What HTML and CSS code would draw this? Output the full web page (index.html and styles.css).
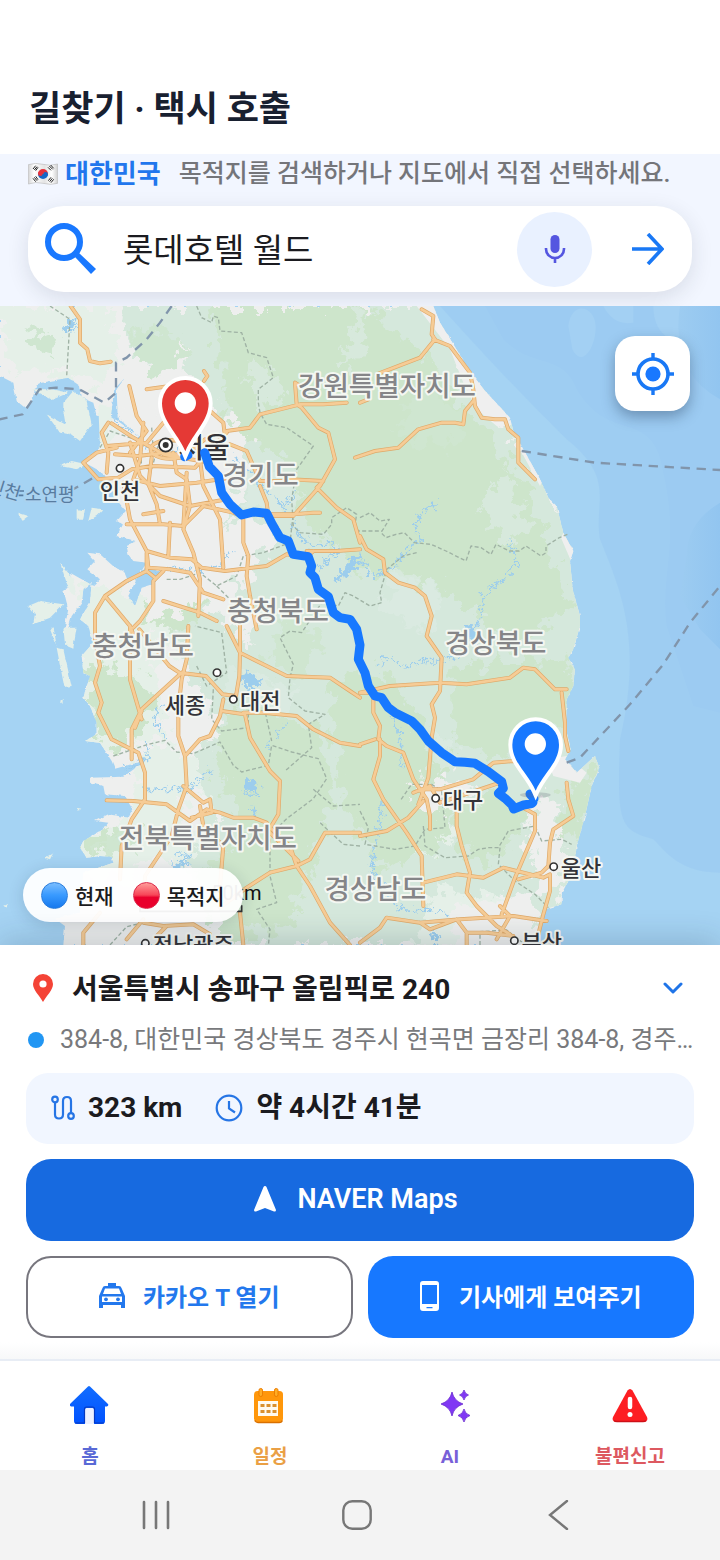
FILE: index.html
```html
<!DOCTYPE html>
<html lang="ko">
<head>
<meta charset="utf-8">
<meta name="viewport" content="width=device-width, initial-scale=1">
<title>길찾기 · 택시 호출</title>
<link rel="stylesheet" href="styles.css">
</head>
<body>
<header class="app-header"><h1 class="app-title">길찾기 · 택시 호출</h1></header>

<section class="search-area">
  <div class="region-row">
    <svg class="flag" viewBox="0 0 90 64" aria-hidden="true">
      <defs><linearGradient id="cloth"><stop offset="0" stop-color="#d5d5d5"/><stop offset=".2" stop-color="#fff"/><stop offset=".55" stop-color="#e4e4e4"/><stop offset=".8" stop-color="#fff"/><stop offset="1" stop-color="#cfcfcf"/></linearGradient></defs>
      <path d="M1 4Q23-3 45 3T89 2V60Q67 66 45 60T1 62Z" fill="url(#cloth)" stroke="#bbb" stroke-width="2"/>
      <path d="M30 32a15 15 0 0 1 30 0Z" fill="#e6323c"/><path d="M30 32a15 15 0 0 0 30 0Z" fill="#1668c7"/>
      <circle cx="37" cy="31" r="7" fill="#e6323c"/><circle cx="53" cy="33" r="7" fill="#1668c7"/>
      <g stroke="#222" stroke-width="3"><path d="M15 17l8-10M19 20l8-10M23 22l7-10M60 12l9 9M64 8l10 10M68 5l9 10M15 45l8 10M19 42l8 10M23 39l7 10M61 52l8-10M65 55l8-10M69 58l8-10"/></g>
    </svg>
    <strong class="country">대한민국</strong>
    <span class="hint">목적지를 검색하거나 지도에서 직접 선택하세요.</span>
  </div>
  <form class="search-box">
    <svg class="search-icon" viewBox="0 0 54 54" aria-hidden="true"><circle cx="20" cy="20" r="16" fill="none" stroke="#1978ff" stroke-width="6"/><path d="M31 30l4 1 17 16-5 5-16-17v-4z" fill="#1978ff"/></svg>
    <input class="search-input" type="text" value="롯데호텔 월드" aria-label="목적지 검색">
    <button class="voice-button" type="button" aria-label="음성 검색"><svg width="22" height="30" viewBox="0 0 22 30"><rect x="6.500" y="1" width="9" height="18" rx="4.500" fill="#5456e0"/><path d="M2 14v1a9 9 0 0 0 18 0v-1M11 24v5" fill="none" stroke="#5456e0" stroke-width="2.600"/></svg></button>
    <button class="go-button" type="submit" aria-label="검색"><svg width="32" height="32" viewBox="0 0 32 32"><path d="M0 16h29M16 1l14 15-14 15" fill="none" stroke="#1978f5" stroke-width="3.6"/></svg></button>
  </form>
</section>

<main class="map">
<svg class="map-canvas" viewBox="0 0 2160 1917" preserveAspectRatio="xMidYMid slice" role="img" aria-label="경로 지도">
<defs>
  <filter id="rough" x="-5%" y="-5%" width="110%" height="110%"><feTurbulence type="fractalNoise" baseFrequency=".025" numOctaves="4" seed="4"/><feDisplacementMap in="SourceGraphic" scale="110" xChannelSelector="R" yChannelSelector="G"/></filter>
  <filter id="coast" x="-5%" y="-5%" width="110%" height="110%"><feTurbulence type="fractalNoise" baseFrequency=".06" numOctaves="3" seed="8"/><feDisplacementMap in="SourceGraphic" scale="10" xChannelSelector="R" yChannelSelector="G"/></filter>
  <filter id="lake" x="-10%" y="-10%" width="120%" height="120%"><feTurbulence type="fractalNoise" baseFrequency=".06" numOctaves="3" seed="3"/><feDisplacementMap in="SourceGraphic" scale="48" xChannelSelector="R" yChannelSelector="G"/></filter>
  <path id="mainland" d="M0 0H1300L1320 50 1345 90 1405 190 1455 255 1530 335 1540 375 1570 430 1620 520 1645 575 1670 600 1690 680 1720 735 1710 765 1718 850 1740 930 1740 960 1720 1030 1705 1055 1725 1090 1720 1140 1700 1180 1698 1270 1712 1330 1695 1360 1730 1400 1785 1350 1798 1385 1775 1440 1755 1530 1730 1620 1720 1700 1685 1760V1795L1635 1810 1620 1860 1600 1917H190L195 1860 165 1838 240 1820 250 1700 340 1670 335 1652 300 1650 260 1655 240 1625 250 1605 310 1570 325 1550 285 1545 325 1525 385 1535 400 1510 375 1470 315 1465 310 1440 270 1430V1415L370 1412 440 1362 345 1388 335 1365 300 1310 255 1305 290 1285V1250L270 1200 250 1175 270 1110 250 1100 245 1050 280 1010 265 960 240 940 270 890 275 830 250 850 245 890 215 930 200 985 195 960 205 910 190 850 215 845 210 800 245 820 280 840 300 820 262 790 285 765 262 740 300 745 345 785 370 795 385 830 415 810 440 770 400 765 385 745 380 720 410 705 350 690 370 655 350 645 378 615 345 575 330 520 290 490 255 470 265 450 305 425 300 370 330 325 290 330 280 290 245 275 240 240 205 215 150 225 110 235 95 285 75 305 50 285 40 230 0 210Z"/>
  <clipPath id="land"><use href="#mainland"/></clipPath>
  <linearGradient id="sea-deep" x1="0" y1="0" x2="1" y2="0"><stop offset="0" stop-color="#9dccf1"/><stop offset="1" stop-color="#92c5f0"/></linearGradient>
</defs>
<rect width="2160" height="1917" fill="#a5d3f3"/>
<path d="M1455 0L1510 100C1600 190 1690 140 1730 250 1830 420 1960 300 1990 500 2040 720 1980 800 2000 960L2080 1200 2160 1220V0Z" fill="#9bcaf1"/>
<path d="M1320 0C1500 200 1600 300 1700 400 1850 520 1780 590 1800 700 1860 850 1930 1000 1860 1300 1850 1560 1860 1570 1960 1600 2000 1640 2040 1700 2160 1700V0Z" fill="#9ccbf1" opacity=".75"/>
<path d="M1705 60c10-80 80-60 82 0s-40 130-70 70zM1810 0q30 60 90 50v-50zM1960 0h110q0 140-60 100-50-30-50-100z" fill="#a3d0f3"/>
<path d="M2160 590q-100 60-100 160l-20 120 60 100 60 60V590ZM2040 0h120v280q-150-80-120-280Z" fill="url(#sea-deep)"/>

<g filter="url(#coast)">
  <use href="#mainland" fill="#eeefee"/>
  <g fill="#e5f0e9"><path d="M190 290l30-35 40 30 15 70-35 50-40-30-10-60zM140 325l55 30 15 30-30-5zM95 250h60l50 10-50 22zM180 480l35-15 45 10-30 15zM230 610l25 3-5 25h-20zM275 605l35 5-20 20-25 15zM55 620l30 10-20 15zM85 900l35-15 70 10-40 40-50 20 5-30zM180 770l30 90 20 10-10-50zM150 970l20 50-10-60zM170 1025l20 5 25 110-22 3zM190 965h40l-10 60-25-10zM180 1185l8-6v15zM135 1655l25-15-10 20zM230 1505l14 3-8 6zM12 1800l12-6-5 14zM295 295l60 10 5 110-60 15z"/></g>
</g>
<g clip-path="url(#land)">
  <g filter="url(#rough)">
    <path d="M380 0H1290L1400 200 1480 310 1570 440 1680 600 1790 950 1750 1300 1850 1350 1780 1600 1700 1800 1500 1917H700L560 1700 600 1500 580 1300 540 1000 300 1350 280 1000 400 870 540 980 600 800 700 620 650 380 540 180 400 160Z" fill="#d5e8dc"/>
    <path d="M0 0h330l20 160-60 80-100-40-180-10zM240 830l290 50 20 400-300 70-40-200zM400 1350l150-50 90 200-60 160-180 20zM1200 1400l130 0 30 200-110 60zM1300 1750l200 20 20 147h-280zM220 1580l200-40-20 180-180 0zM380 900l90-90 40 100z" fill="#e5f0e8"/>
    <path d="M640 0h450l160 120 180 220 120 160 120 260 40 150-170 120-200-180-270-60-150-140-60-200-170-70zM980 1120l160-30 130 150 100 250-60 140-180 60-100-190zM700 1190l260 80 40 200-130 380-200 60-80-200 150-120-100-230zM1360 1080l340-20 40 170-200 130-180-50zM260 1060l150 50 60 60-100 170-90-70zM470 820l150 80-80 80-120-50zM1360 1530l120-80 120 80-120 140-100-40zM1700 1440l100-60-50 180-70 40zM250 1600l90-50 20 80-80 30z" fill="#cde5cb"/>
    <path d="M80 60l80 30 10 70-70-30zM400 60l120 30 50 60-100 60-70-80zM860 930l120 60-90 140-90-70zM1250 250l150 60-40 120-170-50zM340 1590l120-15-60 60-140 10z" fill="#cfe6d0"/>
    <path d="M760 480l160 80-80 70-120-40zM1180 780l150 80-60 120-120-60zM1520 480l60 190-60 50-80-110zM700 1080l200 70-60 70-160-50zM1250 1260l160 90-100 50zM760 150l100 100-50 60-70-80zM1080 0l20 130-70 70 10-100z" fill="#dcebe3" opacity=".7"/>
    <path d="M380 205l60 0 40 140 30-140 45-80 5 130 100 60 90 80-20 140-60 110 30 200 80 100-60 60-130-120-130 60-50-180-50-100-40-180zM570 740l160-110 100 50-90 160zM460 990l100 80 110 210-110 80-80-120zM530 1480l70-20 50 60-80 60zM1240 1430l110-20 80 20-50 70-130 20zM1620 1440l60 80 20 240-80 0-40-180zM1370 1800l230-40v157h-250z" fill="#eeefee"/>
  </g>
  <path d="M1300 0l160 240 70 100-40 20-60-50-40-80-40-100-100-130zM1570 430l60 90-10 20-60-110zM1640 1360l60-10 60 50-20 30-80-20zM1690 680l35 60-12 25-30-70z" fill="#efefef"/>
</g>
<path d="M460 790l25 10-25 35-35 10-20 55-20-30 25-50 25-35zM375 215l-25 35 3 85 70 60-90-65 10-80z" fill="#a5d3f3" filter="url(#coast)"/>

<g fill="none" stroke="#9ccded" stroke-width="5" stroke-linejoin="round" filter="url(#lake)">
  <path d="M190 70l25-30 10 15 5 20M350 340l0 10 80 70 60 25 60-20 60 20 40-60M690 455l70 40 20 50 60 40 10 25 40-60M880 650l20 40 40 35 50-15 20 30-60 50M460 800l40-15 80 10 80-20 30-40M1020 820l40-60 30 5 25 45 60-20 60-70 30-20-20-40 20-40 50-30"/>
  <path d="M1530 700l20 70-40 50-60 50-10 70-40 60-50 40M1140 1090l10-40 60 30 180-30M1170 1210l30 70 5 110M1340 1820l-140-10-90-120 20-90 20-120M380 1390l60-30 5-50M430 1450h130l80-60M500 1300l-40-60 30-50M760 1500l20 60M750 1440l-20 20 40 10M800 1320l60-70M520 1640l50 10-30 30"/>
</g>
<g fill="#9ccded" filter="url(#lake)"><path d="M1050 770l-50 50 15 5 30-20 40-50 5-20zM720 1110l30-10 40 30-30 10 20 25-30-10zM740 1420l35 10 0 35-40-15zM510 1665l60 10-45 15zM1290 1880l10 37h15l-5-40zM1395 960l30 5 10 60-20-20zM190 70l25-30 5 20-15 25z"/></g>

<g fill="none" stroke="#9fb2a4" stroke-width="4" stroke-dasharray="12 7" stroke-linejoin="round">
  <path d="M150 0l60 40-10 170M590 0l15 35 30 15 5-20 15 5 5 40 65 5 20 60 55 15 20 60-45 35v40l5 30 20 35 60 10 80 55-50 70-15 90 5 80 20 20 70 5 25-30v-20l45-30 30 20-5 30 10 20 70 0"/>
  <path d="M300 425l30-50 90 30 5 80 30 5 20-75 60-10M455 365l5 70 90 10M500 820l40 0 60-20 50 40 60-30 20-60 60-10 80-30 10-90M650 840l50 50"/>
  <path d="M1080 635l30-15 30 25 28-5-25 40 15 15 30-10 25-5 30 30 50 5 45 20 60 30 15-45 30 5 30 20 15-30 40 20 30 0 20-15 45 30 15-10v-20l40-25 25-10M1250 740l-40 10-50 40-20 70 5 30-35 10-50-30-25-10-20 40-50-10-60 90-35-5-30 20 40 80-10 40-5 60 50 40 60 10-50 30 10 70-80 70M340 1350l105-35 50-12 35 35 50 5 80-35 40 70 25 20 80-20 10-60 60 20 80 20 25 60-40 60-80 60-20 20M940 1450l60 50 80-5M590 1080l30 60 60-40-15-120-80-20M640 1150l-5 90 30 35 80-10 0-50 50 0 20 90M810 1560v150l20 80-60 20 40 60-5 50M1080 1620l-50-5-70-65M1080 1515l25 50-10 50 90 15 60-10 30-50 60-5-10-110-30-20-60 0-35 50M1270 1560l5 60 60 35 70-5 30-20 30-5 30 0 30-50 80-15 20 45 60-5 30 15M1500 1625l-5 50 50 50 60 40 40 40M330 1917l50-55 40-10M1440 1917v-40l80-5 50 40"/>
</g>
<g fill="none" stroke="#8195ab" stroke-width="7" stroke-dasharray="28 20">
  <path d="M515 0l-35 50-40 50-60 55-32 15v90l-35 30-75-40-70-5-50 5-50 75-70 15M1565 435l220 35 375 22M1700 1370l40-15 150-160 100-120 80-125 90-110M210 555l80-45"/>
</g>

<defs><g id="roads">
  <path d="M212 0l28 40 0 70 22 20 8 35 30 7 32-5M388 240l22 90 30 45-50 65M440 250l70-10 70 30 90 80 5 40M612 195l10 15-10 15M325 350l-20 30 20 60-5 60M335 352l60 40 100 55 120 20M320 420l120-10 50-60 60-15M345 445l70 5 80-10 60 10 60-50M250 470l40-30 60-15M250 470l45 50 60-5 40-25 60-10 130 5 60-70 35-35M390 410l30 100 60 60 90 30 110-20M430 350l-10 110-20 60 80 20 110-10 100-15M455 455l-10 80 25 60 10 60M520 440l10 60 30 20 10 80-20 70 30 70 20 80-5 110M560 500l-10 160M370 530l20 110 50 95 5 50 65 5 60 10 40 60 60 20M380 655h110l60 5 20-20 40-40 90 20 10 5h90l80 0 60-5 20 0M430 625l60-10M510 650l-5 100M600 460l10 80 50 100 10 145M440 735l70 20 65 5 30 25 70 10M440 740l0 55 25 20M490 795l-30 30 0 60-40 60-20 20M440 795l-60 30-65 45-30 50 0 80 15 80-15 50 20 60-10 30 40 80 80 40 20 60 0 80-40 60-30 80-5 100M315 870l75 90 20 50M490 885l110 35 50 25M730 640l0 70 15 40-5 60 10 60 20 100M675 795l125-15 60-35 60 10 20-20M900 240l-15-10 5 65 15 10 50 60 30 15 20 80-45 80-80 90-90 0M680 375l70-10 30-40 120-30 70 0 70-5M690 415l50 20 40 90 85 0M780 540l20 50 5 40M870 520l100 5-20 20 60 60 50 35 20 70M920 735l90 0 70-5"/>
  <path d="M1080 290l25-10M1130 205l130-50 45-55-10-15 5-55-35-20M1300 100l50 20 60 80 10 50 5 50 20 35 40 5 30 0 10 30 30 25 0 75 50 50M1420 285l-25 30-5 40-25-5-40 0-70 20-60 55-70 10-60 20M1080 690l20 40 50 30 5 40 40 30 50 15 30 25 20 60-15 60 45 65-5 100-25 40 10 40-10 60-5 60-5 60-30 80M1080 1160l90-20 150-10 80 5 130-20 40-30 35 5 60 60 35 0M1685 1160l10 90 0 40 10 45M1080 1160l40 0 0 60 20 40-5 40 25 20 50 20 30 80 40 60 10 50 0 40M1125 1300l-45 15M1140 1300l0 50-20 70 30 60 70 100 45 70 5 150M1080 1590l80-15 65-40 45-50M1270 1450l50 0 100-30 60-50 60-5 30 5M1240 1460l50-20 30 50 60-20 120-40M1370 1500l0 60 15 60 25 80-10 60 30 40 60 60 40 25M1270 1730l100-25 80 10 60-30 120 30 20-10 0 50-20 70-20 80M1560 1500l45 25 0 50-60 140-40 110M1700 1430l5 50 15 50-60 40-10 40-5 70-20 20-70 20M1080 1910l60-45 20-30 100 15 120-10 160-10 100 15M1260 1850l30 20 80-30 30 40 0 37M1500 1800l30 30-40 70M1400 1880l60 0 80 10"/>
  <path d="M680 960l40 80-2 70-10 60-40-5-50-55-80-10-30-20-90-110M720 960l0 80 80 40 60 30 130 5 60 40 30 20M545 1100l-120 110-30 60 0 90M390 960l0 160 35 120M425 1215l-20 50M565 960l-5 100-15 60-10 90 0 80 20 60 5 90-25 70-20 80-80 120-5 80M670 1180l-10 50-30 60-30 10-45 50M665 1215l70 10 15 70 60 100 30 30-5 100-30 50 90 90M730 1220l60 0 100 10 50 40 80 40 60 10M800 1550l-40-15-60 0-40-15-40-10-50 35-70-50-100-10-80-2M550 1440l60 50 20-10 5 40-60 15M600 1500l10 60 60 60-10 120M805 1560l65 60 20 60 40 60 60 110 60 67M890 1680l40-20 45-80 105 0M890 1680l-80 20-70 45-80 60M430 1850l60 10 90-5 50 30M720 1820l10 97M300 1820l-50 60 0 37M470 1890l30-30M380 1900l50-60"/>
  <ellipse cx="510" cy="430" rx="58" ry="28"/>
</g></defs>
<g fill="none" stroke-linejoin="round" stroke-linecap="round">
  <use href="#roads" stroke="#dfa969" stroke-width="12"/><use href="#roads" stroke="#f6cc96" stroke-width="8"/>
</g>

<g class="map-labels province" text-anchor="middle">
  <text x="1161" y="270">강원특별자치도</text><text x="782" y="537">경기도</text><text x="834" y="945">충청북도</text><text x="429" y="1050">충청남도</text><text x="1487" y="1041">경상북도</text><text x="624" y="1626">전북특별자치도</text><text x="1126" y="1779">경상남도</text>
</g>
<g class="map-labels city" text-anchor="middle">
  <text class="capital" x="612" y="456">서울</text><text x="360" y="578">인천</text><text x="555" y="1222">세종</text><text x="781" y="1208">대전</text><text x="1389" y="1506">대구</text><text x="1743" y="1710">울산</text><text x="580" y="1940">전남광주</text><text x="1625" y="1932">부산</text>
</g>
<g class="map-labels ferry"><text x="75" y="585">소연평</text><text transform="translate(-40 555) rotate(17)">인천</text><path d="M58 555h14M56 568h14" stroke="#587ca0" stroke-width="5"/></g>
<g fill="#fff" stroke="#333" stroke-width="5"><circle cx="360" cy="487" r="11"/><circle cx="651" cy="1100" r="11"/><circle cx="700" cy="1180" r="11"/><circle cx="1307" cy="1477" r="11"/><circle cx="1661" cy="1682" r="11"/><circle cx="436" cy="1912" r="11"/><circle cx="1543" cy="1904" r="11"/><circle cx="497" cy="417" r="20"/></g><circle cx="497" cy="417" r="9" fill="#333"/>
<g class="map-scale"><text x="634" y="1782">50km</text><path d="M420 1798v18h305v-18" fill="none" stroke="#333" stroke-width="5"/></g>

<g fill="none" stroke="#1778ff" stroke-width="27" stroke-linejoin="round" stroke-linecap="round">
  <path d="M614 440l14 42 27 28 10 50 25 35 35 32 35-9 40 4 15 30 25 43 25 10 15 40 45 7 10 28-5 20 15 15 10 35 30 22 15 48 20 15 30 5 20 30 10 47-5 43 20 40 10 40 20 30 20 5 20 30 20 15 50 25 25 25 25 35 40 35 40 27 30 2 30 3 40 25 40 30 5 20-15 15 20 15 21 20 5 12 30-12 24-4 4-4M1590 1464l12 14"/><path d="M554 452l10-5"/>
</g>
<g stroke="#fff" paint-order="stroke">
  <ellipse cx="1606" cy="1467" rx="46" ry="8" fill="#667" opacity=".25" stroke="none"/>
  <path d="M556 436C532 380 486 345 486 292a70 70 0 0 1 140 0C626 345 580 380 556 436Z" fill="#e53935" stroke-width="24"/>
  <path d="M1607 1454C1583 1400 1537 1370 1537 1316a70 70 0 0 1 140 0C1677 1370 1631 1400 1607 1454Z" fill="#1778ff" stroke-width="24"/>
  <g fill="#fff" stroke="none"><circle cx="556" cy="291" r="32"/><circle cx="1606" cy="1314" r="32"/></g>
</g>
</svg>
  <button class="locate-button" type="button" aria-label="현재 위치"><svg width="42" height="42" viewBox="0 0 42 42"><circle cx="21" cy="21" r="15" fill="none" stroke="#1978f5" stroke-width="3.6"/><circle cx="21" cy="21" r="7.6" fill="#1978ff"/><path d="M21 0v6M21 36v6M0 21h6M36 21h6" stroke="#1978f5" stroke-width="3.4"/></svg></button>
  <div class="legend"><span class="legend-item"><i class="orb orb-blue"></i>현재</span><span class="legend-item"><i class="orb orb-red"></i>목적지</span></div>
</main>

<section class="sheet">
  <div class="destination">
    <svg class="pin" width="20" height="28" viewBox="0 0 20 28" aria-hidden="true"><path d="M10 28C6 21 0 16 0 10a10 10 0 0 1 20 0c0 6-6 11-10 18z" fill="#f44336"/><circle cx="10" cy="10" r="3.6" fill="#fff"/></svg>
    <h2 class="address">서울특별시 송파구 올림픽로 240</h2>
    <button class="expand-button" type="button" aria-label="접기"><svg width="20" height="12" viewBox="0 0 20 12"><path d="M2 2l8 8 8-8" fill="none" stroke="#1f74e8" stroke-width="3" stroke-linecap="round" stroke-linejoin="round"/></svg></button>
  </div>
  <div class="origin"><i class="origin-dot"></i><span class="origin-text">384-8, 대한민국 경상북도 경주시 현곡면 금장리 384-8, 경주시 경상북도</span></div>
  <div class="summary">
    <span class="metric"><svg width="24" height="26" viewBox="0 0 24 26" fill="none" stroke="#2675e5" stroke-width="2.2"><circle cx="4" cy="4.5" r="2.8"/><circle cx="20" cy="21" r="2.8"/><path d="M4 7.500v12q0 4 4 4t4-4V6q0-4 4-4t4 4v12"/></svg>323 km</span>
    <span class="metric"><svg width="28" height="28" viewBox="0 0 28 28" fill="none" stroke="#2675e5" stroke-width="2.200"><circle cx="14" cy="14" r="12.300"/><path d="M14 7v7.500l6 4"/></svg>약 4시간 41분</span>
  </div>
  <button class="action naver" type="button"><svg width="22" height="26" viewBox="0 0 22 26"><path d="M11 0q1 0 1.500 1L22 24q0 2-2 1.500L11 22l-9 3.500Q0 26 0 24L9.500 1Q10 0 11 0z" fill="#fff"/></svg>NAVER Maps</button>
  <div class="action-pair">
    <button class="action kakao" type="button"><svg width="26" height="26" viewBox="0 0 26 26"><path d="M9 0h8v3h3q2 0 2.500 2L26 13v12h-4v-3H4v3H0V13L3.500 5Q4 3 6 3h3zM6 5.500L4 11h18l-2-5.500zM3 13.500V19h20v-5.500z" fill="#2378ed" fill-rule="evenodd"/><circle cx="7" cy="16.300" r="1.900" fill="#2378ed"/><circle cx="19" cy="16.300" r="1.900" fill="#2378ed"/></svg>카카오 T 열기</button>
    <button class="action driver" type="button"><svg width="19" height="30" viewBox="0 0 19 30"><path d="M3 0h13q3 0 3 3v24q0 3-3 3H3q-3 0-3-3V3q0-3 3-3zM2 4v19h15V4zM6.500 26v1.300h6V26z" fill="#fff" fill-rule="evenodd"/></svg>기사에게 보여주기</button>
  </div>
</section>

<nav class="tabs" aria-label="주 메뉴">
  <a class="tab home" href="#"><svg class="tab-icon" viewBox="0 0 40 40"><defs><linearGradient id="home-fill" x2="0" y2="1"><stop stop-color="#126dff"/><stop offset="1" stop-color="#0052ff"/></linearGradient></defs><path d="M18 1.500q1-1 2 0L38 19q1 1.500-1 2.500h-2V36q0 3-3 3H7q-3 0-3-3V21.500H1Q-1 20.500 0 19z" fill="url(#home-fill)"/><path d="M15 39V24.500q0-1.500 1.500-1.500h6q1.500 0 1.500 1.500V39z" fill="#eef1ff"/><path d="M14.500 38V24q0-2 2-2h6q2 0 2 2v14M5 38h9m11 0h9" fill="none" stroke="#0639c0" stroke-width="1.200"/></svg>홈</a>
  <a class="tab schedule" href="#"><svg class="tab-icon" viewBox="0 0 40 40"><rect x="4" y="6" width="29" height="31" rx="3.500" fill="#ff970b"/><path d="M5 35.500q1 2 3 2h21q3 0 3-2" fill="none" stroke="#d97000" stroke-width="1.500"/><g fill="#ffad24" stroke="#ed7d00"><rect x="9" y="3.500" width="3.500" height="8" rx="1.700"/><rect x="24.500" y="3.500" width="3.500" height="8" rx="1.700"/></g><path d="M8 16h20v15H8z" fill="#fffaf0"/><path d="M10.500 19h4v3h-4zm6 0h4v3h-4zm6 0h4v3h-4zm-12 6h4v3h-4zm6 0h4v3h-4zm6 0h4v3h-4z" fill="#d9902f"/></svg>일정</a>
  <a class="tab ai" href="#"><svg class="tab-icon" viewBox="0 0 40 40"><g transform="translate(6 0)" fill="#8038f4" stroke="#6a2bd0" stroke-width=".8"><path d="M16 7q2 9 11 12-9 3-11 12-2-9-11-12 9-3 11-12z"/><path d="M28 5q1 4 4.500 5-3.500 1-4.500 5-1-4-4.500-5 3.500-1 4.500-5zM28 24q1 5 6 6.500-5 1.500-6 6.500-1-5-6-6.500 5-1.500 6-6.500z"/></g></svg>AI</a>
  <a class="tab report" href="#"><svg class="tab-icon" viewBox="0 0 40 40"><path d="M17.500 5.500q2.500-3 5 0L37 32q1.500 4-2.500 5h-29Q1.500 36 3 32z" fill="#fd1e22"/><path d="M4 35.500q1 1 3 1h26q2 0 3-1" fill="none" stroke="#ce1018" stroke-width="1.500"/><path d="M20 14v8" stroke="#fff" stroke-width="4.500" stroke-linecap="round"/><circle cx="20" cy="29.500" r="2.500" fill="#fff"/></svg>불편신고</a>
</nav>
<footer class="system-bar">
  <button class="system-button" type="button" aria-label="최근 앱"><svg width="30" height="30" viewBox="0 0 30 30"><path d="M3 2v26M15 2v26M27 2v26" stroke="#777" stroke-width="2.600" stroke-linecap="round"/></svg></button>
  <button class="system-button" type="button" aria-label="홈 화면"><svg width="30" height="30" viewBox="0 0 30 30"><rect x="1.300" y="1.300" width="27.400" height="27.400" rx="9" fill="none" stroke="#777" stroke-width="2.400"/></svg></button>
  <button class="system-button" type="button" aria-label="뒤로"><svg width="30" height="30" viewBox="0 0 30 30"><path d="M24 1L7 15l17 14" fill="none" stroke="#777" stroke-width="2.400" stroke-linecap="round"/></svg></button>
</footer>
</body>
</html>
```
FILE: styles.css
```css
* { box-sizing: border-box; }
body {
  margin: 0;
  min-height: 100vh;
  display: flex;
  flex-direction: column;
  background: #fff;
  color: #1b1b20;
  font-family: Roboto, "Noto Sans CJK KR", sans-serif;
}
button { border: 0; padding: 0; background: none; font: inherit; color: inherit; cursor: pointer; display: flex; align-items: center; justify-content: center; }
svg { flex: none; }

.app-header { padding: 85px 29px 19px; }
.app-title { margin: 0; font-size: 35px; line-height: 50px; font-weight: 700; color: #182030; }

.search-area { background: #f2f6ff; padding: 4px 28px 14px; overflow: hidden; }
.region-row { display: flex; align-items: center; height: 32px; margin-bottom: 16px; line-height: 32px; white-space: nowrap; }
.flag { width: 30px; height: 22px; margin-right: 7px; }
.country { font-size: 26px; color: #2176ed; margin-right: 18px; }
.hint { font-size: 25px; font-weight: 500; color: #74757a; }
.search-box { display: flex; align-items: center; height: 86px; border-radius: 36px; padding: 0 16px; background: #fff; box-shadow: 0 6px 22px rgba(35, 40, 60, .12); }
.search-icon { width: 54px; height: 54px; }
.search-input { flex: 1; min-width: 0; border: 0; outline: 0; background: none; padding: 0 0 3px; margin-left: 25px; font-family: inherit; font-size: 33px; color: #1b1b20; }
.voice-button { width: 75px; height: 75px; border-radius: 50%; background: #e9f1ff; }
.go-button { width: 56px; height: 56px; margin-left: 28px; }

.map { position: relative; flex: 1; min-height: 320px; overflow: hidden; background: #a5d3f3; }
.map-canvas { position: absolute; inset: 0; width: 100%; height: 100%; }
.map-labels text { paint-order: stroke; stroke: #f4f7f2; stroke-width: 12px; stroke-linejoin: round; }
.province { font-size: 83px; font-weight: 500; fill: #858588; }
.city { font-size: 66px; font-weight: 500; fill: #333338; }
.city .capital { font-size: 84px; }
.ferry { font-size: 54px; fill: #587ca0; }
.ferry text { stroke: #a9d2f0; }
.map-scale { font-size: 60px; fill: #111; }
.locate-button { position: absolute; top: 30px; right: 30px; width: 75px; height: 75px; border-radius: 20px; background: #fff; box-shadow: 0 6px 14px rgba(20, 40, 70, .35); }
.legend { position: absolute; left: 23px; bottom: 23px; display: flex; gap: 19px; height: 54px; align-items: center; padding: 0 18px; border-radius: 27px; background: rgba(255, 255, 255, .94); box-shadow: 0 3px 16px rgba(20, 40, 60, .16); font-size: 21px; font-weight: 500; white-space: nowrap; }
.legend-item { display: flex; align-items: center; gap: 7px; }
.orb { width: 27px; height: 27px; border-radius: 50%; }
.orb-blue { background: linear-gradient(#79bdff, #399aff 48%, #1679ee); border: 1px solid #2b7ddc; }
.orb-red { background: linear-gradient(#ff9c99, #f74558 48%, #e9002c 58%); border: 1px solid #dc294b; }

.sheet { position: relative; padding: 18px 26px 21px; background: linear-gradient(#fff 96%, #f7f8f9); box-shadow: 0 -4px 30px rgba(20, 40, 60, .2); }
.destination { display: flex; align-items: center; height: 50px; padding: 0 11px 0 7px; }
.address { flex: 1; margin: 0 0 0 19px; padding-top: 3px; font-size: 28px; line-height: 40px; font-weight: 700; }
.expand-button { width: 20px; height: 40px; }
.origin { display: flex; align-items: center; margin: 10px 0 16px; height: 34px; color: #78797c; font-size: 25px; line-height: 34px; }
.origin-dot { flex: none; width: 16px; height: 16px; margin: 0 16px 0 2px; border-radius: 50%; background: #2196f3; }
.origin-text { min-width: 0; overflow: hidden; text-overflow: ellipsis; white-space: nowrap; }
.summary { display: flex; align-items: center; gap: 33px; height: 71px; padding: 0 25px 2px; border-radius: 22px; background: #f1f6ff; font-size: 28px; line-height: 40px; font-weight: 700; }
.metric { display: flex; align-items: center; gap: 13px; }
.action { height: 82px; border-radius: 25px; gap: 18px; font-size: 24px; font-weight: 700; padding-bottom: 3px; }
.naver { width: 100%; margin: 15px 0; background: #176ae0; color: #fff; font-size: 27px; font-weight: 600; gap: 21px; padding-right: 8px; }
.action-pair { display: grid; grid-template-columns: 1fr 1fr; gap: 15px; }
.kakao { border: 2px solid #77767e; color: #2378ed; }
.driver { background: #1778ff; color: #fff; gap: 20px; }

.tabs { position: relative; display: grid; grid-template-columns: repeat(4, 1fr); height: 111px; padding-top: 24px; border-top: 2px solid #e8edf5; background: #fff; }
.tab { display: flex; flex-direction: column; align-items: center; gap: 18px; font-size: 19px; line-height: 28px; font-weight: 700; text-decoration: none; }
.tab-icon { width: 40px; height: 40px; }
.home { color: #5969d6; }
.schedule { color: #eaa045; }
.ai { color: #7860d8; }
.report { color: #dd5960; }
.system-bar { display: flex; align-items: center; justify-content: center; gap: 171px; height: 90px; padding-right: 7px; background: #f3f3f3; }
```
